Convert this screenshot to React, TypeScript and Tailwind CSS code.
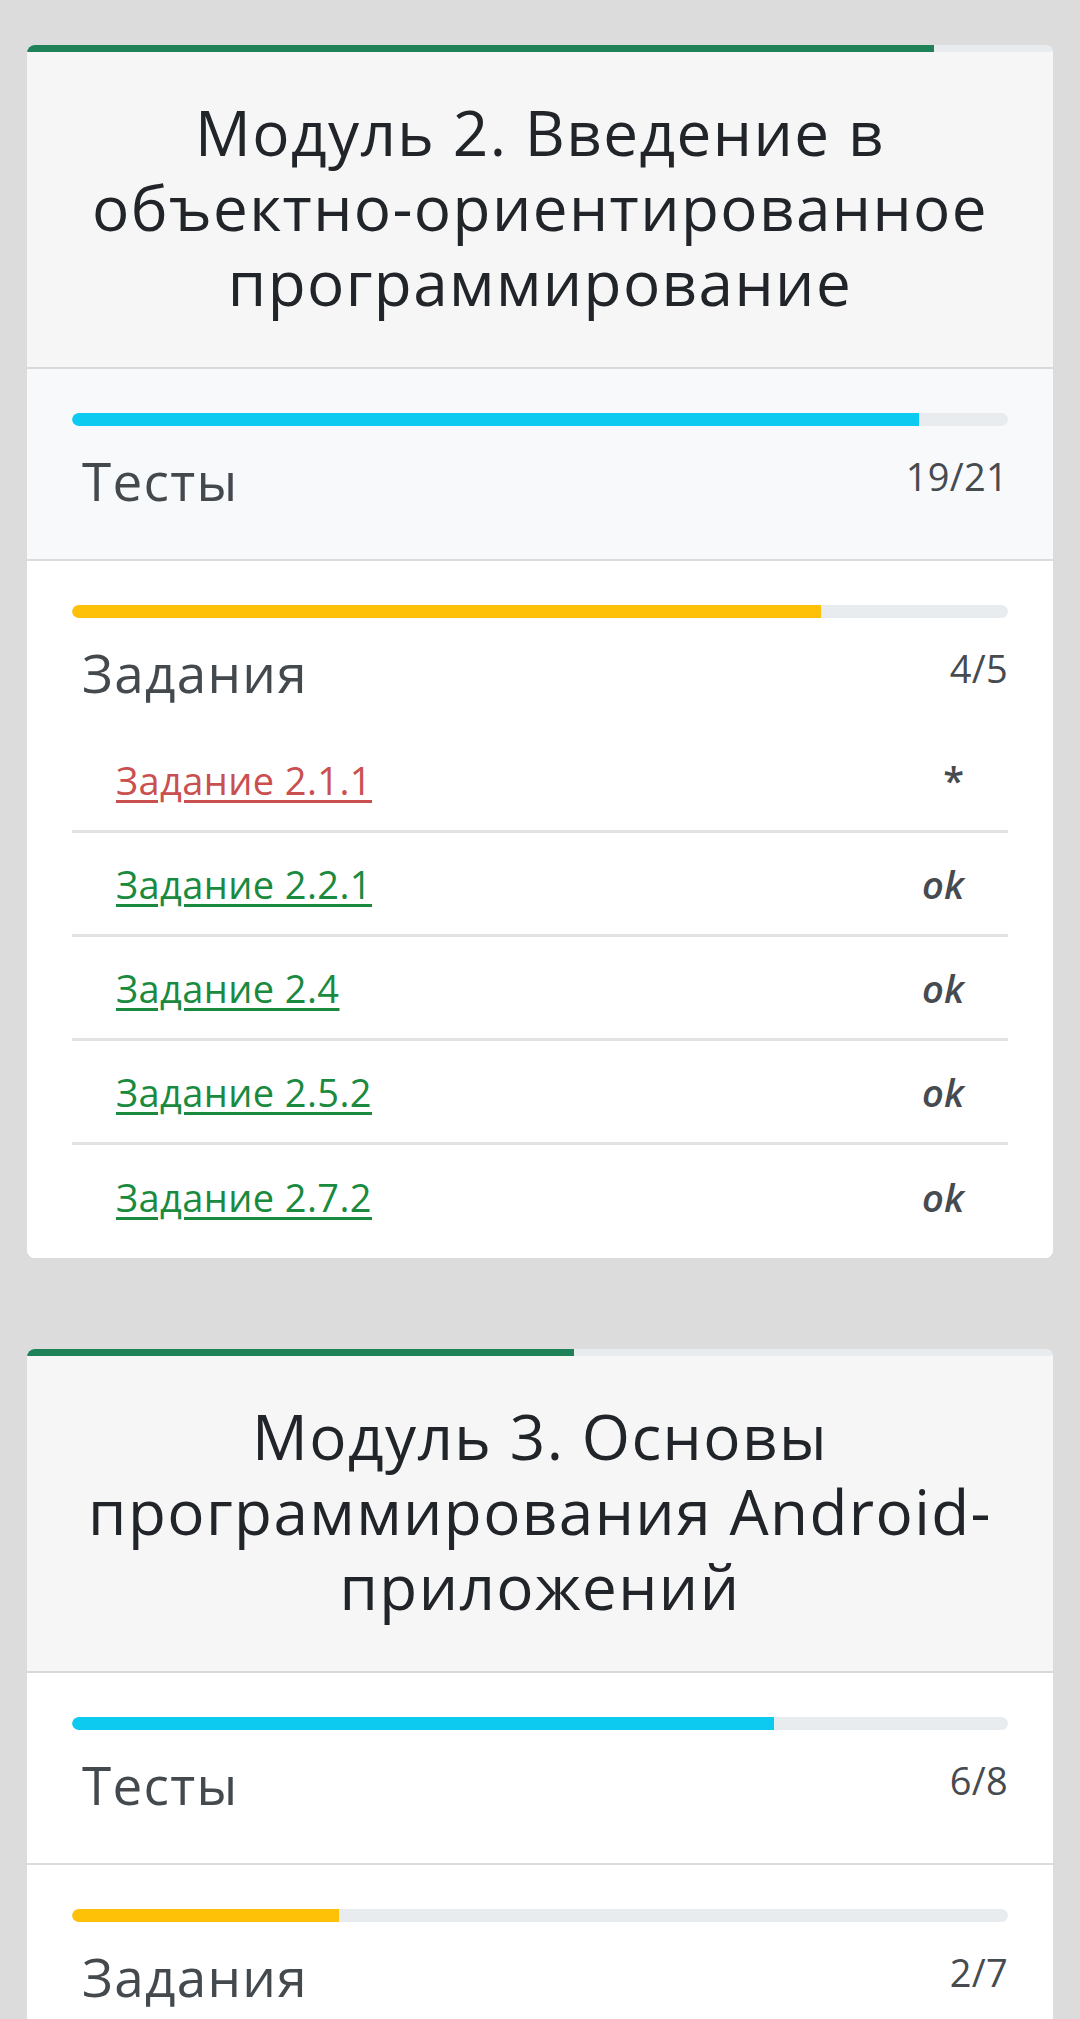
import React from "react";

type Task = { name: string; status: "ok" | "*" };

const font = { fontFamily: '"Open Sans", "Noto Sans", "DejaVu Sans", sans-serif' };

function Bar({ pct, color }: { pct: number; color: string }) {
  return (
    <div className="h-[13px] w-full rounded-full bg-[#e9ecef] overflow-hidden">
      <div className={`h-full rounded-l-full ${color}`} style={{ width: `${pct}%` }} />
    </div>
  );
}

function Section({
  label,
  count,
  pct,
  color,
  bg,
  border,
  tasks,
  extraBottom,
}: {
  label: string;
  count: string;
  pct: number;
  color: string;
  bg: string;
  border: boolean;
  tasks?: Task[];
  extraBottom?: boolean;
}) {
  return (
    <div
      className={`${bg} px-[45px] pt-[44px] ${
        tasks ? "pb-[9px]" : extraBottom ? "pb-[80px]" : "pb-[46px]"
      } ${border ? "border-b-2 border-[#dcdcdc]" : ""}`}
    >
      <Bar pct={pct} color={color} />
      <div className="mt-[23px] flex items-start justify-between pl-[10px]">
        <div className="text-[53px] leading-[64px] tracking-[1.3px] text-[#44494e]">{label}</div>
        <div className="text-[38px] leading-[55px] tracking-[0.3px] text-[#464b50]">{count}</div>
      </div>
      {tasks && (
        <div className="mt-[24px]">
          {tasks.map((t, i) => (
            <div
              key={t.name}
              className={`flex h-[104px] items-center justify-between px-[44px] ${
                i < tasks.length - 1 ? "border-b-[3px] border-[#e2e2e2]" : ""
              }`}
            >
              <a
                href="#"
                className={`text-[38px] leading-[52px] tracking-[0.4px] underline decoration-[3px] underline-offset-[5px] ${
                  t.status === "ok" ? "text-[#1a8a3e]" : "text-[#c9504f]"
                }`}
              >
                {t.name}
              </a>
              {t.status === "ok" ? (
                <span className="text-[38px] leading-[52px] font-semibold italic text-[#464b50]">ok</span>
              ) : (
                <span className="text-[38px] leading-[52px] font-semibold text-[#464b50]">*</span>
              )}
            </div>
          ))}
        </div>
      )}
    </div>
  );
}

function Card({
  top,
  title,
  tests,
  testsPct,
  testsBg,
  tasksCount,
  tasksPct,
  tasks,
  className,
}: {
  top: number;
  title: React.ReactNode;
  tests: string;
  testsPct: number;
  testsBg: string;
  tasksCount: string;
  tasksPct: number;
  tasks?: Task[];
  className?: string;
}) {
  return (
    <div className={`overflow-hidden rounded-[8px] bg-white ${className ?? ""}`}>
      <div className="h-[7px] w-full bg-[#e9ecef]">
        <div className="h-full bg-[#1f8157]" style={{ width: `${top}%` }} />
      </div>
      <div className="border-b-2 border-[#d9d9d9] bg-[#f6f6f6] pb-[47px] pt-[43px] text-center text-[62px] leading-[75px] tracking-[1.4px] text-[#212529]">
        {title}
      </div>
      <Section
        label="Тесты"
        count={tests}
        pct={testsPct}
        color="bg-[#0dcaf0]"
        bg={testsBg}
        border
      />
      <Section
        label="Задания"
        count={tasksCount}
        pct={tasksPct}
        color="bg-[#ffc107]"
        bg="bg-white"
        border={false}
        tasks={tasks}
        extraBottom={!tasks}
      />
    </div>
  );
}

export default function App() {
  const tasks: Task[] = [
    { name: "Задание 2.1.1", status: "*" },
    { name: "Задание 2.2.1", status: "ok" },
    { name: "Задание 2.4", status: "ok" },
    { name: "Задание 2.5.2", status: "ok" },
    { name: "Задание 2.7.2", status: "ok" },
  ];
  return (
    <div className="min-h-screen bg-[#dcdcdc] px-[27px] pt-[45px]" style={font}>
      <Card
        top={88.4}
        title={
          <>
            Модуль 2. Введение в
            <br />
            объектно-ориентированное
            <br />
            программирование
          </>
        }
        tests="19/21"
        testsPct={(19 / 21) * 100}
        testsBg="bg-[#f8f9fa]"
        tasksCount="4/5"
        tasksPct={80}
        tasks={tasks}
      />
      <Card
        className="mt-[91px]"
        top={53.3}
        title={
          <>
            Модуль 3. Основы
            <br />
            программирования Android-
            <br />
            приложений
          </>
        }
        tests="6/8"
        testsPct={75}
        testsBg="bg-white"
        tasksCount="2/7"
        tasksPct={(2 / 7) * 100}
      />
    </div>
  );
}
